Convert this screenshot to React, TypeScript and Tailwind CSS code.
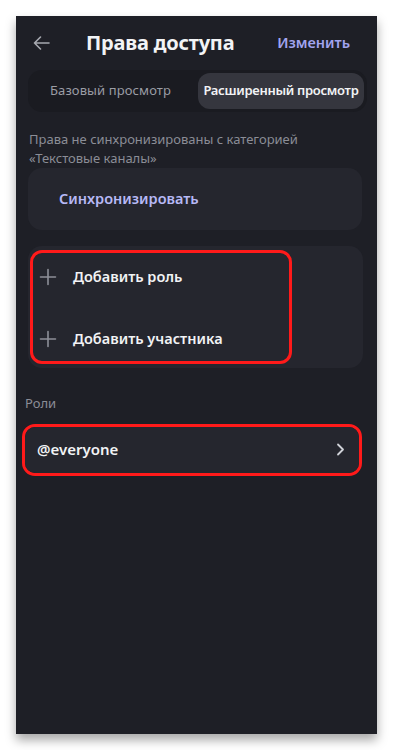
import React from "react";

function Plus() {
  return (
    <svg width="18" height="18" viewBox="0 0 18 18" fill="none">
      <path d="M9 1.5v15M1.5 9h15" stroke="#8d8f98" strokeWidth="1.6" strokeLinecap="round" />
    </svg>
  );
}

export default function App() {
  return (
    <div className="min-h-[750px] w-[393px] bg-white p-4" style={{ fontFamily: '"Noto Sans", "Open Sans", sans-serif' }}>
      <div className="flex h-[718px] w-[361px] flex-col bg-[#1e1f26] shadow-[0_6px_10px_rgba(0,0,0,0.35)]">
        {/* Header */}
        <div className="flex h-[54px] items-center">
          <div className="ml-[17px] flex w-[18px] items-center">
            <svg width="17" height="14" viewBox="0 0 17 14" fill="none">
              <path d="M16 7H1.5M7.5 1L1.5 7l6 6" stroke="#a7a9b0" strokeWidth="1.6" strokeLinecap="round" strokeLinejoin="round" />
            </svg>
          </div>
          <div className="ml-[35px] text-[20px] font-bold tracking-[-0.2px] text-[#f2f3f5]">Права доступа</div>
          <div className="ml-auto mr-[27px] text-[14.5px] font-semibold text-[#a2a4ef]">Изменить</div>
        </div>

        {/* Tabs */}
        <div className="ml-3 mr-[10px] flex h-[42px] items-center rounded-[14px] bg-[#1a1b21] p-[3px]">
          <div className="flex flex-1 items-center justify-center whitespace-nowrap pr-[8px] text-[13px] tracking-[0.1px] text-[#9b9da5]">Базовый просмотр</div>
          <div className="flex h-[36px] w-[166px] items-center justify-center whitespace-nowrap rounded-[12px] bg-[#35363e] text-[13px] font-semibold tracking-[-0.3px] text-[#f2f3f5]">
            Расширенный просмотр
          </div>
        </div>

        {/* Info */}
        <div className="mt-[18px] px-[13px] text-[13px] leading-[19px] text-[#8b8d96]">
          Права не синхронизированы с категорией
          <br />
          «Текстовые каналы»
        </div>

        {/* Sync card */}
        <div className="ml-3 mr-[15px] mt-0 flex h-[62px] items-center rounded-[14px] bg-[#25262e] pl-[31px]">
          <span className="text-[14.5px] font-semibold text-[#b7b9f6]">Синхронизировать</span>
        </div>

        {/* Add card */}
        <div className="relative ml-3 mr-[14px] mt-[16px] flex flex-col gap-[4px] rounded-[14px] bg-[#25262e] pt-[2px]">
          <div className="flex h-[58px] items-center pl-[11px]">
            <Plus />
            <span className="ml-[16px] text-[14.5px] font-semibold text-[#f2f3f5]">Добавить роль</span>
          </div>
          <div className="flex h-[58px] items-center pl-[11px]">
            <Plus />
            <span className="ml-[16px] text-[14.5px] font-semibold text-[#f2f3f5]">Добавить участника</span>
          </div>
          <div className="absolute left-[2px] top-[4px] h-[114px] w-[262px] rounded-[12px] border-[3px] border-[#ff1a1a]" />
        </div>

        {/* Roles label */}
        <div className="mt-[26px] pl-[9px] text-[13px] text-[#8b8d96]">Роли</div>

        {/* everyone */}
        <div className="ml-[6px] mr-[15px] mt-[10px] rounded-[13px] border-[3px] border-[#ff1a1a]">
          <div className="flex h-[46px] items-center rounded-[10px] bg-[#25262e] pl-[12px] pr-[14px]">
            <span className="text-[15px] font-semibold text-[#f2f3f5]">@everyone</span>
            <svg className="ml-auto" width="9" height="13" viewBox="0 0 9 13" fill="none">
              <path d="M2 1.5l5 5-5 5" stroke="#d0d2d8" strokeWidth="1.8" strokeLinecap="round" strokeLinejoin="round" />
            </svg>
          </div>
        </div>
      </div>
    </div>
  );
}
